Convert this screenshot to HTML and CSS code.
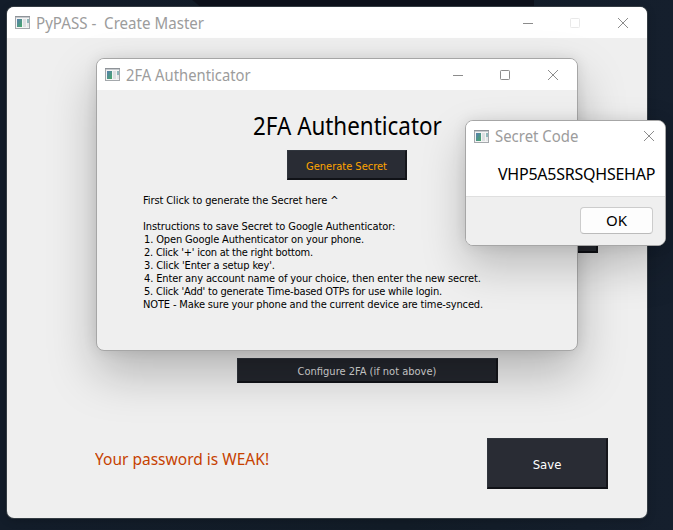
FILE: index.html
```html
<!DOCTYPE html>
<html lang="en">
<head>
<meta charset="utf-8">
<title>PyPASS</title>
<link rel="stylesheet" href="styles.css">
</head>
<body>
<svg width="0" height="0" class="defs">
  <defs>
    <linearGradient id="pane" x1="0" y1="0" x2="1" y2="1"><stop offset="0" stop-color="#587eb0"/><stop offset="1" stop-color="#46a868"/></linearGradient>
    <symbol id="app" viewBox="0 0 15 13">
      <rect x=".5" y=".5" width="14" height="12" fill="#f4f4f4" stroke="#a4a8ac"/>
      <path d="M0 .5H15" stroke="#8e9398"/><path d="M1 1.5H14" stroke="#c6cace"/>
      <rect x="2" y="3" width="5" height="8" fill="url(#pane)"/>
      <rect x="8" y="3" width="3" height="8" fill="#dcdfe1"/>
      <rect x="12" y="3" width="2" height="4" fill="#91b8bb"/><rect x="12" y="7" width="2" height="4" fill="#e5e7e8"/>
    </symbol>
    <symbol id="min" viewBox="0 0 12 12"><path d="M2 6.5H12" stroke="currentColor"/></symbol>
    <symbol id="max" viewBox="0 0 12 12"><rect x="1.5" y="1.5" width="9" height="9" rx=".8" fill="none" stroke="currentColor"/></symbol>
    <symbol id="close" viewBox="0 0 12 12"><path d="M1 1L11 11M11 1L1 11" stroke="currentColor"/></symbol>
  </defs>
</svg>
<main class="desktop">
  <section class="window master">
    <header class="titlebar"><svg class="app"><use href="#app"/></svg><h2 class="t-master">PyPASS -&nbsp; Create Master</h2>
      <div class="controls"><svg><use href="#min"/></svg><svg class="off"><use href="#max"/></svg><svg><use href="#close"/></svg></div></header>
    <div class="master-body">
      <button class="dark upper"></button>
      <button class="dark configure"><span>Configure 2FA (if not above)</span></button>
      <div class="bottom"><p class="weak">Your password is WEAK!</p><button class="dark save"><span>Save</span></button></div>
    </div>
  </section>
  <section class="window auth">
    <header class="titlebar"><svg class="app"><use href="#app"/></svg><h2 class="t-auth">2FA Authenticator</h2>
      <div class="controls"><svg><use href="#min"/></svg><svg><use href="#max"/></svg><svg><use href="#close"/></svg></div></header>
    <div class="auth-body">
      <h1>2FA Authenticator</h1>
      <button class="dark generate"><span>Generate Secret</span></button>
      <div class="notes">
        <p class="n1">First Click to generate the Secret here ^</p>
        <p>&nbsp;</p>
        <p class="n2">Instructions to save Secret to Google Authenticator:</p>
        <p class="step n3">1. Open Google Authenticator on your phone.</p>
        <p class="step n4">2. Click '+' icon at the right bottom.</p>
        <p class="step n5">3. Click 'Enter a setup key'.</p>
        <p class="step n6">4. Enter any account name of your choice, then enter the new secret.</p>
        <p class="step n7">5. Click 'Add' to generate Time-based OTPs for use while login.</p>
        <p class="n8">NOTE - Make sure your phone and the current device are time-synced.</p>
      </div>
    </div>
  </section>
  <section class="window secret">
    <header class="titlebar"><svg class="app"><use href="#app"/></svg><h2 class="t-secret">Secret Code</h2>
      <div class="controls"><svg><use href="#close"/></svg></div></header>
    <p class="code">VHP5A5SRSQHSEHAP</p>
    <footer><button class="ok"><span>OK</span></button></footer>
  </section>
</main>
</body>
</html>
```
FILE: styles.css
```css
* { box-sizing: border-box; margin: 0; padding: 0; }
body { width: 673px; height: 530px; overflow: hidden; font-family: "Noto Sans", sans-serif; }
.defs { position: absolute; }
.desktop {
  position: relative; width: 673px; height: 530px; overflow: hidden;
  background:
    linear-gradient(40deg, transparent 5px, #0d111b 6px) 192px 0 / 342px 7px no-repeat,
    linear-gradient(90deg, #131d2a, #121c27 60%, #151f2d);
}
.window { position: absolute; display: flex; flex-direction: column; border-radius: 8px; overflow: hidden; background: #efefef; }
.master { left: 7px; top: 7px; width: 640px; height: 511px; border-radius: 7px; box-shadow: 0 0 0 1px #343c43, 0 2px 10px #0003; }
.auth { left: 96px; top: 58px; width: 482px; height: 293px; border: 1px solid #a6a6a6; box-shadow: 0 22px 48px #00000040, 0 0 14px #00000018; }
.secret { left: 465px; top: 120px; width: 201px; height: 126px; border: 1px solid #a6a6a6; background: #fff; box-shadow: 0 20px 44px #00000038, 0 0 14px #00000018; }
.titlebar { display: flex; align-items: center; height: 31px; flex: none; padding-left: 8px; background: #fff; color: #9c9c9c; }
.secret .titlebar { height: 30px; }
.app { width: 15px; height: 13px; flex: none; margin-right: 6px; }
h2 { font-size: 16px; font-weight: 400; line-height: 22px; white-space: pre; transform-origin: left; }
.t-master { transform: scaleX(.944); }
.t-auth { transform: scaleX(.924); }
.t-secret { transform: scaleX(.933); }
.controls { display: flex; gap: 36px; margin-left: auto; margin-right: 18px; color: #8c8c8c; }
.controls svg { width: 12px; height: 12px; }
.controls .off { color: #e9e9e9; }
.secret .controls { margin-right: 10px; }
.master-body { display: flex; flex-direction: column; flex: 1; }
.dark {
  display: flex; align-items: center; justify-content: center;
  background: #292c34; border: solid; border-width: 1px 2px 2px 1px; border-color: #30353d #15161b #101217 #30353d;
  color: #fff; font: 11px "DejaVu Sans Condensed", "DejaVu Sans", sans-serif; white-space: nowrap;
}
.upper { width: 261px; height: 25px; margin: 190px 0 0 330px; }
.configure { width: 261px; height: 25px; margin: 105px 0 0 230px; padding-top: 2px; background: #23262d; color: #ddd; }
.bottom { display: flex; justify-content: space-between; align-items: flex-start; margin: 55px 39px 0 88px; }
.weak { font: 16px/22px "Noto Sans", sans-serif; margin-top: 10px; color: #c64100; white-space: nowrap; transform: scaleX(.97); transform-origin: left; }
.save { width: 121px; height: 51px; padding-top: 2px; font-size: 13px; }
.auth-body { display: flex; flex-direction: column; flex: 1; }
h1 { margin: 18px 0 0 156px; font: 25px/34px "Noto Sans", sans-serif; color: #000; white-space: nowrap; transform: scaleX(.896); transform-origin: left; }
.generate { width: 120px; height: 30px; margin: 8px 0 0 190px; padding-top: 3px; color: #ffa500; }
.notes { margin: 14px 0 0 46px; font: 11px/13px "DejaVu Sans Condensed", "DejaVu Sans", sans-serif; color: #000; white-space: nowrap; }
.step { padding-left: 1px; }
.n1, .n2 { letter-spacing: -.1px; }
.n3, .n5, .n8 { letter-spacing: -.14px; }
.n4 { letter-spacing: -.23px; }
.n6 { letter-spacing: -.13px; }
.n7 { letter-spacing: -.2px; }
.code { margin: 13px 0 0 32px; font-size: 16px; line-height: 20px; letter-spacing: -.24px; white-space: nowrap; }
footer { display: flex; justify-content: flex-end; align-items: center; height: 49px; margin-top: auto; padding: 0 12px 2px 0; background: #efefef; border-top: 1px solid #dfdfdf; }
.ok { width: 73px; height: 27px; border: 1px solid #ccc; border-bottom-color: #bbb; border-radius: 4px; background: #fdfdfd; font: 15px/20px "Noto Sans", sans-serif; color: #000; }
```
